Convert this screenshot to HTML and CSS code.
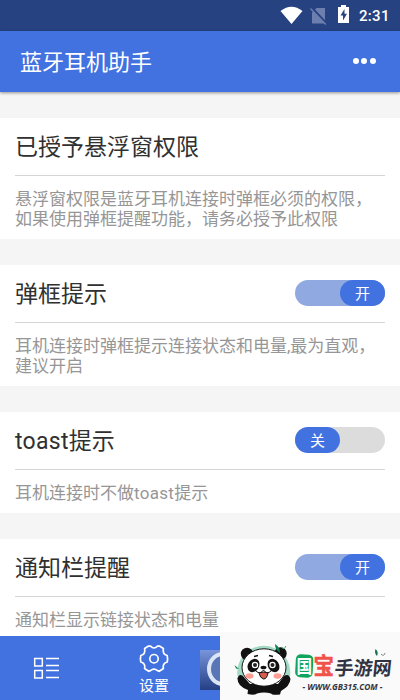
FILE: index.html
```html
<!DOCTYPE html>
<html lang="zh-CN">
<head>
<meta charset="utf-8">
<title>蓝牙耳机助手</title>
<link rel="stylesheet" href="styles.css">
</head>
<body>
<div class="screen">
  <div class="status">
    <svg class="status-icons" viewBox="280 0 72 31" width="72" height="31">
      <path fill="#fff" d="M280.500 11Q291.500 2.500 302.500 11L291.500 24Z"/>
      <path fill="#6c7fae" d="M316.500 8H325V23.500H312V12.500Z"/>
      <path stroke="#264281" stroke-width="2.500" d="M311.500 7.500L326.500 23.500"/>
      <path stroke="#6c7fae" stroke-width="1.400" d="M310.500 8.500L325.800 24.500"/>
      <path fill="#fff" d="M338 7H341V5H346V7H349V23H338Z"/>
      <path fill="#264281" d="M344.500 9L340.500 15.500H343V20.500L347 13.800H344.500Z"/>
    </svg>
    <span class="clock">2:31</span>
  </div>
  <header class="appbar">
    <h1>蓝牙耳机助手</h1>
    <div class="more"><i></i><i></i><i></i></div>
  </header>
  <main class="list">
    <section class="card">
      <div class="head"><h2>已授予悬浮窗权限</h2></div>
      <p>悬浮窗权限是蓝牙耳机连接时弹框必须的权限，<br>如果使用弹框提醒功能，请务必授予此权限</p>
    </section>
    <section class="card">
      <div class="head"><h2>弹框提示</h2><div class="switch on"><span>开</span></div></div>
      <p>耳机连接时弹框提示连接状态和电量,最为直观，<br>建议开启</p>
    </section>
    <section class="card">
      <div class="head"><h2><span class="latin">toast</span>提示</h2><div class="switch"><span>关</span></div></div>
      <p>耳机连接时不做<span class="latin">toast</span>提示</p>
    </section>
    <section class="card">
      <div class="head"><h2>通知栏提醒</h2><div class="switch on"><span>开</span></div></div>
      <p>通知栏显示链接状态和电量</p>
    </section>
  </main>
  <nav class="tabs">
    <div class="tab">
      <svg width="26" height="24" viewBox="0 0 26 24" fill="none" stroke="#fff" stroke-width="1.500">
        <path d="M1.700 1.500H9.300V9.100H1.700ZM1.700 13.500H9.300V21.100H1.700ZM13 1.500H26M13 8.500H26M13 13.500H26M13 20.500H26"/>
      </svg>
    </div>
    <div class="tab settings">
      <svg width="30" height="30" viewBox="0 0 30 30" fill="none" stroke="#fff" stroke-width="1.700" stroke-linejoin="round">
        <path d="M9.500 2L11.500 2.200Q15 5.800 18.500 2.200L20.500 2L24.400 4.500Q23.200 10.300 28.200 11.500L28.600 15.400L28.200 18Q23.200 19.500 24.400 24.500L20.300 27.300L18.500 26.600Q15 23.800 11.500 26.600L9.700 27.300L5.600 24.500Q6.800 19.500 1.800 18L1.400 15L1.800 11.500Q6.800 10.300 5.600 4.500Z"/>
        <circle cx="15" cy="14.700" r="4.200"/>
      </svg>
      <span>设置</span>
    </div>
    <div class="tab thumb">
      <svg width="54" height="40" viewBox="0 0 54 40">
        <defs><linearGradient id="shade" x2="0" y2="1"><stop stop-color="#7894da"/><stop offset="1" stop-color="#243f83"/></linearGradient></defs>
        <path fill="url(#shade)" d="M0 0H54V40H0Z"/>
        <ellipse cx="23" cy="19" rx="14" ry="15" fill="#5875b8" stroke="#dce5f5" stroke-width="4"/>
      </svg>
    </div>
  </nav>
  <div class="badge">
    <svg class="panda" viewBox="230 632 64 68" width="64" height="68">
      <path fill="#a2dac4" d="M237.500 676A26.500 26.500 0 1 1 290 676Z"/>
      <g fill="#111">
        <circle cx="247" cy="654" r="6.200"/><circle cx="280.500" cy="653.500" r="6.200"/>
        <path d="M237.500 678Q239 673 243 676L250 684H278L284 676Q289 673 290.500 679Q290 686 281 691L280 694.500Q272 695.500 271 693.500Q264 691.500 257 693.500Q255 695.500 247.500 694L248 690Q237 686 237.500 678Z"/>
      </g>
      <ellipse cx="264" cy="667.500" rx="22" ry="18.700" fill="#fff" stroke="#111" stroke-width="1"/>
      <g fill="#111">
        <ellipse cx="253.500" cy="665.500" rx="5.500" ry="7" transform="rotate(32 253.500 665.500)"/>
        <ellipse cx="273.500" cy="665.500" rx="5.500" ry="7" transform="rotate(-32 273.500 665.500)"/>
        <ellipse cx="263.500" cy="667.500" rx="3" ry="1.800"/>
      </g>
      <g fill="#222" stroke="#fff" stroke-width="1.200"><circle cx="255" cy="665" r="2.600"/><circle cx="272.500" cy="665" r="2.600"/></g>
      <path d="M254 656.500L258 655.500M269 655.500L273 656.500" stroke="#111" stroke-width="1.300"/>
      <path fill="#fff" stroke="#111" d="M256 671Q260 675 263.500 670Q267 675 271 671" stroke-width="1"/>
      <path fill="#d65b50" stroke="#111" d="M259 673Q264 671 268 673Q267 679 263.500 679Q260 678 259 673Z"/>
      <g fill="#ff9e93"><ellipse cx="249.500" cy="676" rx="4" ry="2.700"/><ellipse cx="277.500" cy="676" rx="4" ry="2.700"/></g>
      <path fill="#138054" d="M275 644Q280 647 280 653Q275 650 275 644ZM234.500 665L239 669L236 668.500Z"/>
      <path d="M282 648Q285 650 286 646" stroke="#49a27d" fill="none"/>
    </svg>
    <svg class="wordmark" viewBox="294 632 106 68" width="106" height="68">
      <rect x="295.500" y="654.500" width="17.500" height="23" rx="5" fill="#10a45c" transform="rotate(3 305 666)"/>
      <text class="guo" transform="translate(296.500 673) scale(.92 1.100)">国</text>
      <text class="bao" transform="translate(313.500 674) scale(.93 1.050)">宝</text>
      <text class="name" transform="translate(334 675) skewX(-6)">手游网</text>
      <text class="url" x="302.500" y="689.500" textLength="80" lengthAdjust="spacingAndGlyphs">- WWW.GB315.COM -</text>
      <path fill="#15734d" d="M375.500 649Q379 652 377 656Q374 653 375.500 649Z"/>
      <path fill="none" stroke="#70867c" d="M381 654Q384 657 385 653"/>
    </svg>
  </div>
</div>
</body>
</html>
```
FILE: styles.css
```css
* { box-sizing: border-box; }
body { margin: 0; font-family: Roboto, "Noto Sans CJK SC", sans-serif; }
h1, h2, p { margin: 0; font-weight: 400; }
svg { display: block; }
.screen {
  position: relative;
  display: flex;
  flex-direction: column;
  width: 400px;
  height: 700px;
  overflow: hidden;
  background: #f5f5f5;
}
.status {
  display: flex;
  flex: none;
  align-items: center;
  justify-content: flex-end;
  height: 31px;
  padding-right: 12px;
  background: #264281;
  color: #fff;
}
.clock { width: 29px; margin-left: 7px; font-size: 15px; font-weight: 500; letter-spacing: 0.3px; white-space: nowrap; }
.appbar {
  z-index: 1;
  display: flex;
  flex: none;
  align-items: center;
  justify-content: space-between;
  height: 61px;
  padding: 0 24.500px 0 20px;
  background: #4272e0;
  box-shadow: 0 1px 3px rgba(0, 0, 0, 0.4);
  color: #fff;
}
.appbar h1 { padding-top: 3px; font-size: 22px; line-height: 32px; }
.more { display: flex; gap: 2.500px; margin-top: -2px; }
.more i { width: 6px; height: 6px; border-radius: 50%; background: #fff; }
.list {
  display: flex;
  flex: 1;
  flex-direction: column;
  gap: 26px;
  min-height: 0;
  padding-top: 26px;
  overflow: hidden;
}
.card { flex: none; padding: 0 15px 10px; background: #fff; }
.head {
  display: flex;
  align-items: center;
  justify-content: space-between;
  height: 58px;
  border-bottom: 1px solid #d5d5d5;
}
.head h2 { padding-top: 3px; color: #303030; font-size: 23px; line-height: 34px; }
.card p { padding-top: 13px; color: #969696; font-size: 17px; line-height: 20px; white-space: nowrap; }
.latin { letter-spacing: 0.3px; }
.switch { display: flex; width: 90px; height: 26px; margin-top: -1px; border-radius: 13px; background: #dcdcdc; }
.switch span {
  width: 45px;
  height: 26px;
  border-radius: 13px;
  background: #4272e0;
  color: #fff;
  font-size: 15px;
  line-height: 29px;
  text-align: center;
}
.switch.on { justify-content: flex-end; background: #90a9e0; }
.tabs { display: flex; flex: none; height: 64px; background: #4272e0; color: #fff; }
.tab { display: flex; flex-direction: column; align-items: center; width: 92px; padding-top: 21px; }
.settings { width: 108px; padding-top: 8px; padding-left: 16px; font-size: 15px; line-height: 22px; }
.settings svg { flex: none; }
.settings span { margin-top: 1px; }
.thumb { align-items: flex-start; padding-top: 14px; }
.badge {
  position: absolute;
  right: 0;
  bottom: 0;
  z-index: 2;
  display: flex;
  width: 180px;
  height: 68px;
  padding-left: 10px;
  background: #fafafa;
}
.wordmark text { font-family: "Noto Sans CJK SC", sans-serif; font-weight: 700; }
.wordmark .guo { fill: #fff; font-size: 17px; }
.wordmark .bao { fill: #f15249; stroke: #f15249; stroke-width: 0.5px; font-size: 22px; }
.wordmark .name { fill: #303342; font-size: 19px; }
.wordmark .url { fill: #303342; font-family: "Open Sans", sans-serif; font-size: 8.500px; font-style: italic; font-weight: 700; }
```
